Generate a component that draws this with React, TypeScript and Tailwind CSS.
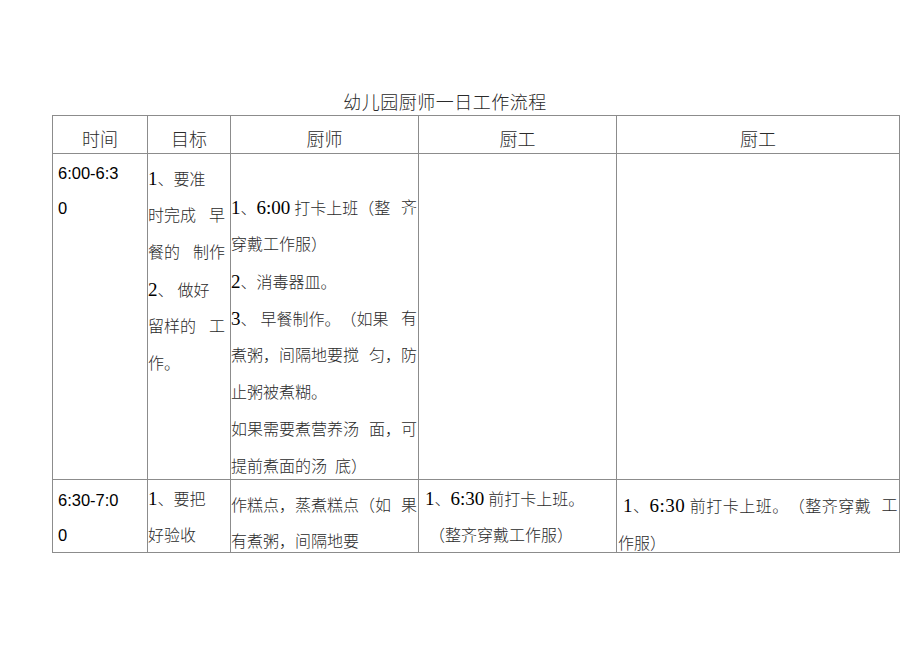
import React from "react";

// digits in the doc are set larger, in a serif
function Rich({ text }: { text: string }) {
  const parts = text.split(/(\d[\d:]*)/);
  return (
    <>
      {parts.map((p, i) =>
        /^\d/.test(p) ? (
          <span key={i} className="text-[19px] font-normal text-black">{p}</span>
        ) : (
          <span key={i}>{p}</span>
        )
      )}
    </>
  );
}

// "|" marks where a justified line gets stretched
function Line({ text, className = "" }: { text: string; className?: string }) {
  if (text.includes("|")) {
    const segs = text.split("|");
    return (
      <div className={`flex justify-between whitespace-pre ${className}`}>
        {segs.map((s, i) => (
          <span key={i}>
            <Rich text={s} />
          </span>
        ))}
      </div>
    );
  }
  return (
    <div className={`whitespace-pre ${className}`}>
      <Rich text={text} />
    </div>
  );
}

const cell = "border-r border-b border-[#8c8c8c] overflow-hidden";
const head = `${cell} pt-[12px] text-center text-[18px] leading-[24px]`;
const timeCell = `${cell} pl-[5px] font-['Liberation_Sans',sans-serif] text-[16.5px] leading-[35px] text-black`;
const l37 = "h-[37px] leading-[37px]";

export default function App() {
  return (
    <div className="w-[920px] h-[651px] bg-white font-['Liberation_Serif','Noto_Sans_CJK_SC',serif] font-light text-[16px] text-[#2a2a2a] [text-spacing-trim:space-all]">
      <div className="pt-[91px] pl-[52px]">
        <div className="w-[848px] pr-[62px] text-center text-[18px] leading-[24px] tracking-[0.5px]">
          幼儿园厨师一日工作流程
        </div>

        <div className="grid w-[848px] grid-cols-[95px_83px_188px_198px_283px] grid-rows-[38px_326px_73px] border-l border-t border-[#8c8c8c]">
          {/* header */}
          <div className={head}>时间</div>
          <div className={head}>目标</div>
          <div className={head}>厨师</div>
          <div className={head}>厨工</div>
          <div className={head}>厨工</div>

          {/* 6:00 - 6:30 */}
          <div className={`${timeCell} pt-[2px]`}>
            <div>6:00-6:3</div>
            <div>0</div>
          </div>
          <div className={`${cell} pt-[6px] pr-[5px]`}>
            <Line className={l37} text="1、要准" />
            <Line className={l37} text="时完成|早" />
            <Line className={l37} text="餐的|制作" />
            <Line className={l37} text="2、 做好" />
            <Line className={l37} text="留样的|工" />
            <Line className={l37} text="作。" />
          </div>
          <div className={`${cell} pt-[35px] pr-[1px]`}>
            <Line className={l37} text="1、6:00 打卡上班（整|齐" />
            <Line className={l37} text="穿戴工作服）" />
            <Line className={l37} text="2、消毒器皿。" />
            <Line className={l37} text="3、 早餐制作。（如果|有" />
            <Line className={l37} text="煮粥，间隔地要搅|匀，防" />
            <Line className={l37} text="止粥被煮糊。" />
            <Line className={l37} text="如果需要煮营养汤|面，可" />
            <Line className={l37} text="提前煮面的汤  底）" />
          </div>
          <div className={cell} />
          <div className={cell} />

          {/* 6:30 - 7:00 */}
          <div className={`${timeCell} pt-[3px]`}>
            <div>6:30-7:0</div>
            <div>0</div>
          </div>
          <div className={cell}>
            <Line className={l37} text="1、要把" />
            <Line className={l37} text="好验收" />
          </div>
          <div className={`${cell} pt-[8px] pr-[1px]`}>
            <Line className="h-[36px] leading-[36px]" text="作糕点，蒸煮糕点（如|果" />
            <Line className="h-[36px] leading-[36px]" text="有煮粥，间隔地要" />
          </div>
          <div className={cell}>
            <Line className={`${l37} pl-[6px]`} text="1、6:30 前打卡上班。" />
            <Line className={`${l37} pl-[10px]`} text="（整齐穿戴工作服）" />
          </div>
          <div className={`${cell} pt-[7px] pr-[1px]`}>
            <Line className="h-[38px] leading-[38px] pl-[6px] tracking-[0.5px]" text="1、6:30 前打卡上班。（整齐穿戴|工" />
            <Line className="h-[38px] leading-[38px] pl-[1px]" text="作服）" />
          </div>
        </div>
      </div>
    </div>
  );
}
